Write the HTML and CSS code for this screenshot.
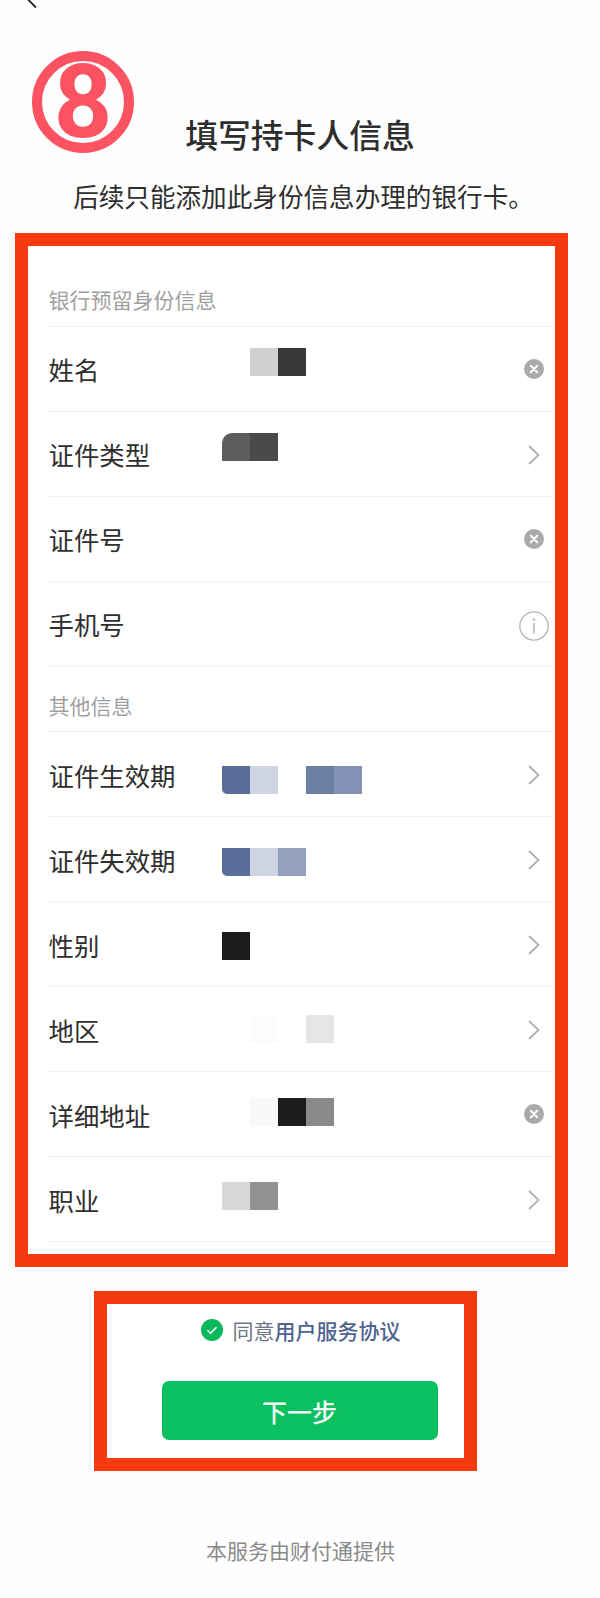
FILE: index.html
```html
<!DOCTYPE html>
<html lang="zh-CN">
<head>
<meta charset="utf-8">
<title>填写持卡人信息</title>
<link rel="stylesheet" href="styles.css">
</head>
<body>
<svg width="0" height="0" class="defs">
  <defs>
    <symbol id="clear" viewBox="0 0 20 20">
      <circle cx="10" cy="10" r="10" fill="#aaaaaa"/>
      <path d="M6.8 6.8l6.4 6.4M13.2 6.8l-6.4 6.4" stroke="#fff" stroke-width="2" stroke-linecap="round" fill="none"/>
    </symbol>
    <symbol id="chev" viewBox="0 0 12 20">
      <path d="M1 1l9.5 9-9.5 9" stroke="#b0b0b0" stroke-width="1.8" fill="none"/>
    </symbol>
    <symbol id="info" viewBox="0 0 30 30">
      <circle cx="15" cy="15" r="14.2" stroke="#b4b4b4" stroke-width="1.3" fill="none"/>
      <circle cx="15" cy="8.6" r="1.2" fill="#b4b4b4"/>
      <path d="M15 12v10.5" stroke="#b4b4b4" stroke-width="1.5" fill="none"/>
    </symbol>
  </defs>
</svg>

<header class="top">
  <svg class="back" width="12" height="10" viewBox="0 0 12 10"><path d="M0.5 -1L9 7.5" stroke="#222" stroke-width="1.8" fill="none"/></svg>
  <div class="badge">8</div>
  <h1 class="title">填写持卡人信息</h1>
  <p class="sub">后续只能添加此身份信息办理的银行卡。</p>
</header>

<section class="box form">
  <div class="head head-a"><span>银行预留身份信息</span></div>

  <div class="row">
    <span class="label">姓名</span>
    <div class="val t22 ind1"><i class="c-d0"></i><i class="c-38"></i></div>
    <svg class="ic-clear"><use href="#clear"/></svg>
  </div>
  <div class="row">
    <span class="label">证件类型</span>
    <div class="val t21"><i class="c-5c"></i><i class="c-4a"></i></div>
    <svg class="ic-chev"><use href="#chev"/></svg>
  </div>
  <div class="row">
    <span class="label">证件号</span>
    <div class="val t21"></div>
    <svg class="ic-clear"><use href="#clear"/></svg>
  </div>
  <div class="row">
    <span class="label">手机号</span>
    <div class="val t21"></div>
    <svg class="ic-info"><use href="#info"/></svg>
  </div>

  <div class="head head-b"><span>其他信息</span></div>

  <div class="row low">
    <span class="label">证件生效期</span>
    <div class="val t34"><i class="c-b1"></i><i class="c-b2"></i><i class="c-none"></i><i class="c-b3"></i><i class="c-b4"></i></div>
    <svg class="ic-chev"><use href="#chev"/></svg>
  </div>
  <div class="row low">
    <span class="label">证件失效期</span>
    <div class="val t31"><i class="c-b1"></i><i class="c-b2"></i><i class="c-b5"></i></div>
    <svg class="ic-chev"><use href="#chev"/></svg>
  </div>
  <div class="row low">
    <span class="label">性别</span>
    <div class="val t30"><i class="c-1c"></i></div>
    <svg class="ic-chev"><use href="#chev"/></svg>
  </div>
  <div class="row low">
    <span class="label">地区</span>
    <div class="val t28 ind1"><i class="c-fd"></i><i class="c-none"></i><i class="c-e6"></i></div>
    <svg class="ic-chev"><use href="#chev"/></svg>
  </div>
  <div class="row low">
    <span class="label">详细地址</span>
    <div class="val t26 ind1"><i class="c-fa"></i><i class="c-1c"></i><i class="c-8a"></i></div>
    <svg class="ic-clear"><use href="#clear"/></svg>
  </div>
  <div class="row low">
    <span class="label">职业</span>
    <div class="val t25"><i class="c-d8"></i><i class="c-92"></i></div>
    <svg class="ic-chev"><use href="#chev"/></svg>
  </div>
</section>

<section class="box action">
  <div class="agree">
    <svg class="ic-check" viewBox="0 0 22 22"><circle cx="11" cy="11" r="11" fill="#0ab85c"/><path d="M6.5 11.2l3.1 3 5.9-6" stroke="#fff" stroke-width="1.6" fill="none"/></svg>
    <span class="agree-text">同意<a class="link">用户服务协议</a></span>
  </div>
  <button class="next">下一步</button>
</section>

<footer class="foot">本服务由财付通提供</footer>
</body>
</html>
```

FILE: styles.css
```css
* { box-sizing: border-box; }
html, body { margin: 0; padding: 0; }
body {
  width: 600px;
  height: 1598px;
  overflow: hidden;
  background: #fefefe;
  color: #2e2e2e;
  font-family: "Noto Sans CJK SC", "Noto Sans", sans-serif;
}
.defs { position: absolute; }

.top {
  position: relative;
  height: 233px;
  padding-top: 112px;
  text-align: center;
}
.back { position: absolute; left: 27px; top: 0; }
.badge {
  position: absolute;
  left: 32px;
  top: 51px;
  width: 102px;
  height: 102px;
  border: 10px solid #fb5361;
  border-radius: 50%;
  display: flex;
  align-items: center;
  justify-content: center;
  color: #fb5361;
  font: 700 102px/1 Roboto, sans-serif;
}
.title {
  margin: 0;
  font-size: 32.8px;
  line-height: 44px;
  font-weight: 500;
}
.sub {
  margin: 22px 0 0;
  padding-left: 7px;
  font-size: 25.6px;
  line-height: 36px;
}

.box { border: 13.5px solid #f7390f; background: #fff; }

.form {
  width: 553px;
  height: 1034px;
  margin-left: 15px;
  padding-left: 18.5px;
  padding-right: 3px;
}
.head {
  display: flex;
  align-items: flex-end;
  color: #9f9f9f;
  font-size: 21px;
  line-height: 30px;
  padding-left: 2px;
  border-bottom: 1px solid #f2f2f2;
}
.head-a { height: 81px; padding-bottom: 12px; }
.head-b { height: 65px; padding-bottom: 11px; }

.row {
  display: flex;
  align-items: flex-start;
  height: 85px;
  padding-left: 2px;
  border-bottom: 1px solid #f2f2f2;
}
.label {
  align-self: center;
  flex: 0 0 173px;
  font-size: 25.4px;
  line-height: 34px;
}
.row.low .label { margin-top: 1px; }

.val { display: flex; flex: 1; }
.val i { display: block; width: 28px; height: 28px; }
.ind1 { padding-left: 28px; }
.t21 { margin-top: 21px; }
.t22 { margin-top: 21px; }
.t25 { margin-top: 25px; }
.t26 { margin-top: 26px; }
.t28 { margin-top: 28px; }
.t30 { margin-top: 30px; }
.t31 { margin-top: 31px; }
.t34 { margin-top: 34px; }

.c-d0 { background: #d0d0d0; }
.c-38 { background: #383838; }
.c-5c { background: #5c5c5c; border-radius: 10px 0 0 0; }
.c-4a { background: #4a4a4a; }
.c-b1 { background: #5a6e9a; border-radius: 0 0 0 5px; }
.c-b2 { background: #ced4e2; }
.c-b3 { background: #6b7fa3; }
.c-b4 { background: #8292b5; }
.c-b5 { background: #93a1bf; }
.c-1c { background: #1c1c1c; }
.c-fa { background: #f9f9f9; }
.c-fd { background: #fcfcfc; }
.c-e6 { background: #e6e6e6; }
.c-8a { background: #8a8a8a; }
.c-d8 { background: #d8d8d8; }
.c-92 { background: #929292; }
.c-none { background: transparent; }

.ic-clear, .ic-chev, .ic-info { align-self: center; flex: none; }
.ic-clear { width: 20px; height: 20px; margin-right: 8px; }
.ic-chev { width: 12px; height: 20px; margin-right: 12px; margin-top: 1px; }
.ic-info { width: 30px; height: 30px; margin-right: 3px; margin-top: 3px; }

.action {
  width: 383px;
  height: 180px;
  margin: 24px 0 0 94px;
  padding-left: 54.5px;
  display: flex;
  flex-direction: column;
}
.agree {
  display: flex;
  align-items: center;
  height: 26px;
  margin-top: 13px;
  margin-left: 39px;
  gap: 10px;
}
.ic-check { width: 22px; height: 22px; flex: none; }
.agree-text {
  color: #6f7688;
  font-size: 21px;
  line-height: 26px;
  white-space: nowrap;
}
.link { color: #4f6390; font-weight: 500; }
.next {
  width: 276px;
  height: 59px;
  margin-top: 38px;
  border: 0;
  border-radius: 7px;
  background: #0bc060;
  color: #f4fff8;
  font-family: inherit;
  font-size: 25px;
  font-weight: 500;
}

.foot {
  margin-top: 64px;
  padding-left: 1px;
  text-align: center;
  color: #8a8a8a;
  font-size: 21px;
  line-height: 30px;
}
```
